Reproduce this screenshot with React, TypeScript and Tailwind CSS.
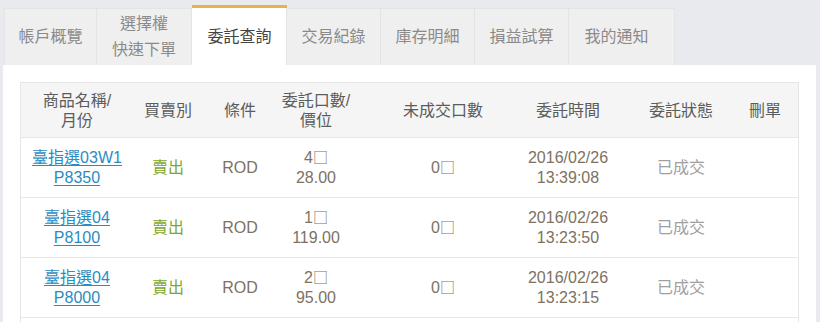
import React from 'react';

const tabs = [
  { label: ['帳戶概覽'], width: 'w-[93px]' },
  { label: ['選擇權', '快速下單'], width: 'w-[96px]' },
  { label: ['委託查詢'], width: 'w-[95px]', active: true },
  { label: ['交易紀錄'], width: 'w-[95px]' },
  { label: ['庫存明細'], width: 'w-[95px]' },
  { label: ['損益試算'], width: 'w-[95px]' },
  { label: ['我的通知'], width: 'w-[107px] pr-[10px]' },
];

const orders = [
  { name: '臺指選03W1', strike: 'P8350', qty: '4', price: '28.00', date: '2016/02/26', time: '13:39:08' },
  { name: '臺指選04', strike: 'P8100', qty: '1', price: '119.00', date: '2016/02/26', time: '13:23:50' },
  { name: '臺指選04', strike: 'P8000', qty: '2', price: '95.00', date: '2016/02/26', time: '13:23:15' },
];

// shared column template for header and rows
const cols = 'grid grid-cols-[112px_70px_74px_78px_176px_74px_152px_16px_1fr]';
const cell = 'flex flex-col items-center justify-center whitespace-nowrap';

// the lot unit shows up as a missing-glyph box in the original page
function Box() {
  return (
    <span className="text-[15px]" style={{ fontFamily: '"Noto Sans CJK TC", sans-serif' }}>
      □
    </span>
  );
}

export default function App() {
  return (
    <div
      className="h-screen overflow-hidden bg-[#e9eaed] pl-[3px] pr-[4px] pt-[5px] text-[16px]"
      style={{ fontFamily: '"Liberation Sans", "Noto Sans CJK TC", sans-serif' }}
    >
      {/* Tabs */}
      <div className="flex items-end pl-px">
        {tabs.map((tab, i) =>
          tab.active ? (
            <div
              key={i}
              className={`${tab.width} h-[60px] flex flex-col items-center justify-center bg-white border-t-[3px] border-[#e8b14f] text-[#444] leading-[26px]`}
            >
              {tab.label.map((l) => <span key={l}>{l}</span>)}
            </div>
          ) : (
            <div
              key={i}
              className={`${tab.width} h-[57px] flex flex-col items-center justify-center bg-[#efefef] border border-b-0 border-[#e4e4e4] -ml-px first:ml-0 text-[#8a8a8a] leading-[26px]`}
            >
              {tab.label.map((l) => <span key={l}>{l}</span>)}
            </div>
          )
        )}
      </div>

      {/* Panel */}
      <div className="bg-white px-[17px] pt-[17px] pb-6">
        <div className="w-[779px] border border-[#e6e6e6]">
          <div className={`${cols} h-[55px] bg-[#f5f5f5] border-b border-[#e6e6e6] text-[#5c5c5c] leading-[20px] pt-[2px]`}>
            <div className={cell}><span>商品名稱/</span><span>月份</span></div>
            <div className={cell}>買賣別</div>
            <div className={cell}>條件</div>
            <div className={cell}><span>委託口數/</span><span>價位</span></div>
            <div className={cell}>未成交口數</div>
            <div className={cell}>委託時間</div>
            <div className={cell}>委託狀態</div>
            <div className={cell}>刪單</div>
            <div />
          </div>

          {orders.map((o) => (
            <div key={o.time} className={`${cols} h-[60px] border-b border-[#e8e8e8] leading-[20px] text-[#7d7262]`}>
              <div className={`${cell} text-[#2b8cc2] underline underline-offset-2`}>
                <a href="#">{o.name}</a>
                <a href="#">{o.strike}</a>
              </div>
              <div className={`${cell} text-[#7ea82a]`}>賣出</div>
              <div className={cell}>ROD</div>
              <div className={cell}><span>{o.qty}<Box /></span><span>{o.price}</span></div>
              <div className={cell}><span>0<Box /></span></div>
              <div className={cell}><span>{o.date}</span><span>{o.time}</span></div>
              <div className={`${cell} text-[#a0a0a0]`}>已成交</div>
              <div className={cell} />
              <div />
            </div>
          ))}
          <div className={`${cols} h-[60px]`} />
        </div>
      </div>
    </div>
  );
}
